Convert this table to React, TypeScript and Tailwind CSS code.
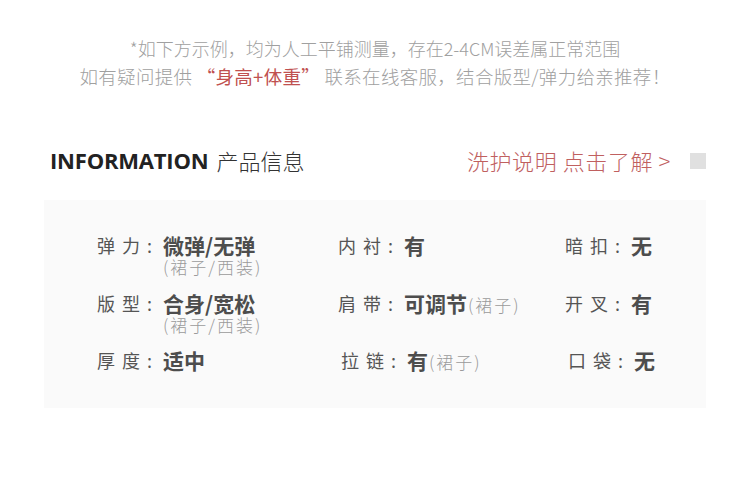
const cjk = "font-['Noto_Sans_CJK_SC','Noto_Sans',sans-serif]";

type Cell = { label: string; value: string; note?: string; sub?: string; shift?: string };

const rows: Cell[][] = [
  [
    { label: '弹力', value: '微弹/无弹', sub: '(裙子/西装)' },
    { label: '内衬', value: '有' },
    { label: '暗扣', value: '无' },
  ],
  [
    { label: '版型', value: '合身/宽松', sub: '(裙子/西装)' },
    { label: '肩带', value: '可调节', note: '(裙子)' },
    { label: '开叉', value: '有' },
  ],
  [
    { label: '厚度', value: '适中' },
    { label: '拉链', value: '有', note: '(裙子)', shift: 'pl-[3px]' },
    { label: '口袋', value: '无', shift: 'pl-[3px]' },
  ],
];

function InfoCell({ cell }: { cell: Cell }) {
  return (
    <div className={`flex ${cell.shift ?? ''}`}>
      <div className="w-[66px] shrink-0 flex text-[18px] leading-[24px] text-[#555] whitespace-nowrap">
        <span className="tracking-[7px]">{cell.label}</span>
        <span>:</span>
      </div>
      <div className="flex flex-col">
        <div className="flex items-baseline whitespace-nowrap">
          <span className="text-[21px] leading-[24px] font-bold text-[#4d4d4d]">{cell.value}</span>
          {cell.note && (
            <span className="ml-[1px] text-[17px] font-light tracking-[2px] text-[#9a9a9a]">{cell.note}</span>
          )}
        </div>
        {cell.sub && (
          <span className="text-[17px] leading-[20px] font-light tracking-[2px] text-[#9a9a9a] whitespace-nowrap">
            {cell.sub}
          </span>
        )}
      </div>
    </div>
  );
}

export default function App() {
  return (
    <div className={`w-[750px] h-[492px] bg-white ${cjk}`}>
      {/* notice */}
      <div className="pt-[34px] text-center leading-[28px] text-[#a0a0a0] font-light">
        <p className="text-[18px]">*如下方示例，均为人工平铺测量，存在2-4CM误差属正常范围</p>
        <p className="text-[18.5px] tracking-[0.3px] [text-spacing-trim:space-all]">
          如有疑问提供&nbsp;
          <span className="text-[#c0504f] font-normal">“身高+体重”</span>
          &nbsp;联系在线客服，结合版型/弹力给亲推荐！
        </p>
      </div>

      {/* header */}
      <div className="mt-[54px] flex items-center pl-[50px] pr-[44px]">
        <span className="font-['Open_Sans','Noto_Sans',sans-serif] text-[22px] font-bold text-[#222] tracking-[-0.2px]">
          INFORMATION
        </span>
        <span className="ml-[8px] text-[22px] font-light text-[#333]">产品信息</span>
        <span className="ml-auto text-[22px] font-light tracking-[0.6px] text-[#c0605f]">洗护说明 点击了解 &gt;</span>
        <span className="ml-[19px] w-[16px] h-[16px] bg-[#e0e0e0]" />
      </div>

      {/* panel */}
      <div className="mx-[44px] mt-[23px] h-[208px] bg-[#fafafa] pt-[33px] pl-[53px]">
        <div className="flex flex-col gap-[13.5px]">
          {rows.map((row, i) => (
            <div key={i} className="grid grid-cols-[241px_227px_1fr]">
              {row.map((cell, j) => (
                <InfoCell key={j} cell={cell} />
              ))}
            </div>
          ))}
        </div>
      </div>
    </div>
  );
}
